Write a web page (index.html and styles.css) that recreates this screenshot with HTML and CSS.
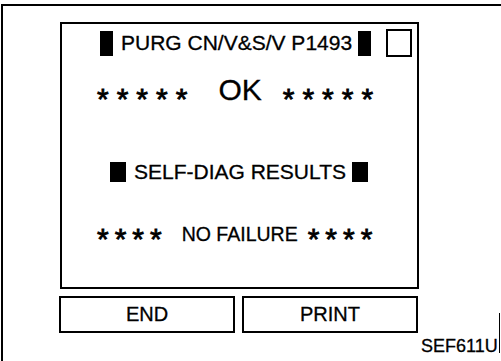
FILE: index.html
```html
<!DOCTYPE html>
<html lang="en">
<head>
    <meta charset="UTF-8">
    <title>SEF611U</title>
    <link rel="stylesheet" href="styles.css">
</head>
<body>
    <div class="sheet">
        <div class="screen">
            <div class="title-row">
                <span class="mark"></span>
                <span class="title">PURG CN/V&amp;S/V P1493</span>
                <span class="mark"></span>
                <span class="check"></span>
            </div>
            <div class="ok-row">
                <span class="stars">*****</span>
                <span class="ok">OK</span>
                <span class="stars">*****</span>
            </div>
            <div class="diag-row">
                <span class="mark small"></span>
                <span class="title">SELF-DIAG RESULTS</span>
                <span class="mark small"></span>
            </div>
            <div class="result-row">
                <span class="stars">****</span>
                <span class="result">NO FAILURE</span>
                <span class="stars">****</span>
            </div>
        </div>
        <div class="bottom">
            <div class="buttons">
                <div class="btn">END</div>
                <div class="btn">PRINT</div>
            </div>
            <div class="code"><span>SEF611U</span></div>
        </div>
    </div>
</body>
</html>
```

FILE: styles.css
```css
body {
    margin: 0;
    font-family: "Liberation Sans", Arial, sans-serif;
    color: #000;
    background: #fff;
    -webkit-text-stroke: 0.3px #000;
}
.sheet {
    margin: 4px 0 0 1px;
    height: 357px;
    box-sizing: border-box;
    border-top: 2px solid #000;
    border-left: 2px solid #000;
    padding: 16px 0 0 57px;
}
.screen {
    width: 359px;
    height: 267px;
    box-sizing: border-box;
    border: 2px solid #000;
}
.title-row {
    display: flex;
    align-items: center;
    height: 28px;
    margin-top: 5px;
    padding-left: 38px;
}
.mark {
    width: 13px;
    height: 25px;
    background: #000;
}
.mark.small {
    width: 16px;
    height: 20px;
}
.title {
    font-size: 21px;
    margin: 0 6px 0 8px;
    white-space: nowrap;
}
.check {
    width: 26px;
    height: 28px;
    box-sizing: border-box;
    border: 2px solid #000;
    margin-left: 15px;
}
.ok-row, .result-row, .diag-row {
    display: flex;
    align-items: center;
    padding-left: 35px;
}
.ok-row {
    height: 30px;
    margin-top: 18px;
}
.stars {
    font-size: 30px;
    letter-spacing: 8px;
    line-height: 30px;
    margin-top: 17px;
    -webkit-text-stroke: 0.8px #000;
}
.ok {
    font-size: 30px;
    margin: 0 21px 0 23px;
}
.diag-row {
    height: 24px;
    margin-top: 55px;
    padding-left: 48px;
}
.result-row {
    height: 24px;
    margin-top: 38px;
}
.result-row .stars {
    letter-spacing: 6px;
    margin-top: 9px;
}
.result {
    font-size: 19.5px;
    margin: 0 10px 0 14px;
}
.bottom {
    display: flex;
    align-items: flex-start;
}
.buttons {
    display: flex;
    gap: 7px;
    margin-top: 7px;
    margin-left: -1px;
}
.btn {
    width: 176px;
    height: 37px;
    box-sizing: border-box;
    border: 2px solid #000;
    font-size: 20px;
    text-align: center;
    line-height: 33px;
}
.code {
    margin-top: 24px;
    margin-left: 3px;
    height: 40px;
    width: 79px;
    box-sizing: border-box;
    border-right: 1px solid #000;
    font-size: 18px;
    line-height: 14px;
    display: flex;
    align-items: flex-end;
}
```
